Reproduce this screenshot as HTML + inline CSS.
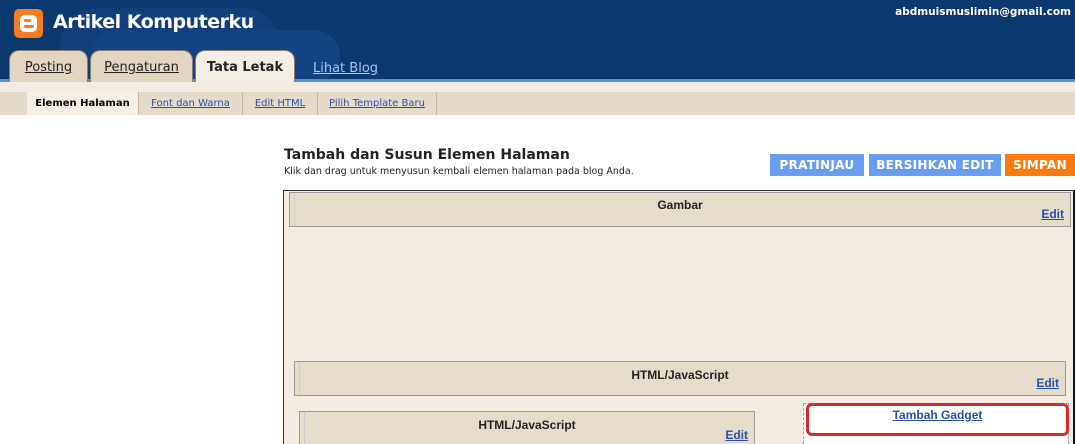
<!DOCTYPE html>
<html><head><meta charset="utf-8"><style>
*{margin:0;padding:0;box-sizing:border-box}
html{width:1075px;height:444px;overflow:hidden}
body{width:1075px;height:444px;overflow:hidden;background:#fff;font-family:"DejaVu Sans","Liberation Sans",sans-serif;position:relative}
.a{position:absolute}
#hdr{left:0;top:0;width:1075px;height:82px;background:#0c3870}
.blob{background:#144383;border-radius:40px}
.tab{top:50px;height:32px;background:#e2d6c3;border:1px solid #8a7d6a;border-bottom:none;border-radius:10px 10px 0 0;font-size:13px;color:#222;text-align:center;line-height:34px}
.tab u{text-decoration:underline}
a,.lnk{color:#2a4fa8;text-decoration:underline}
.sub{font-size:10px;top:92px;height:23px;line-height:23px;text-align:center;border-right:1px solid #c4b8a4}
.btn{top:154px;height:22px;color:#fff;font-weight:bold;font-size:12px;line-height:22px;text-align:center;letter-spacing:.3px}
.box{background:#e5dccb;border:1px solid #9a9a9a;font-family:"Liberation Sans",sans-serif;font-size:12px;font-weight:bold;color:#222;text-align:center}
.box .e{position:absolute;right:6px;bottom:5px;font-size:12px;color:#2a4fa8;text-decoration:underline}
.grip{position:absolute;left:1px;top:1px;bottom:1px;width:4px;border-right:1px dotted #bbb}
</style></head><body>
<div id="hdr" class="a">
 <div class="a blob" style="left:60px;top:8px;width:220px;height:74px;background:#123f7c"></div>
 <div class="a blob" style="left:90px;top:30px;width:250px;height:52px"></div>
 <div class="a" style="left:14px;top:9px;width:29px;height:29px;background:#f57d1f;border-radius:5px"></div>
 <div class="a" style="left:20px;top:15px;width:17px;height:17px;background:#fff;border-radius:5px"></div>
 <div class="a" style="left:24px;top:19px;width:7px;height:3px;background:#f57d1f;border-radius:2px"></div>
 <div class="a" style="left:24px;top:25px;width:10px;height:3px;background:#f57d1f;border-radius:2px"></div>
 <div class="a" style="left:53px;top:11px;font-size:19px;font-weight:bold;color:#fff;font-family:'DejaVu Sans',sans-serif;letter-spacing:-.5px">Artikel Komputerku</div>
 <div class="a" style="right:4px;top:6px;font-size:10.5px;font-weight:bold;color:#fff">abdmuismuslimin@gmail.com</div>
 <div class="a" style="left:0;top:79px;width:1075px;height:3px;background:#5b8fd8"></div>
 <div class="a tab" style="left:9px;width:79px"><u>Posting</u></div>
 <div class="a tab" style="left:90px;width:103px"><u>Pengaturan</u></div>
 <div class="a tab" style="left:195px;width:100px;background:#f4ede3;font-weight:bold;height:33px">Tata Letak</div>
 <div class="a" style="left:313px;top:61px;font-size:13px;color:#a9c7ef;text-decoration:underline">Lihat Blog</div>
</div>
<div class="a" style="left:0;top:82px;width:1075px;height:10px;background:#f3ece2"></div>
<div class="a" style="left:0;top:92px;width:1075px;height:23px;background:#e5dbcb"></div>
<div class="a sub" style="left:27px;width:112px;background:#f4eee5;font-weight:bold;color:#000">Elemen Halaman</div>
<div class="a sub lnk" style="left:139px;width:104px">Font dan Warna</div>
<div class="a sub lnk" style="left:243px;width:75px">Edit HTML</div>
<div class="a sub lnk" style="left:318px;width:119px">Pilih Template Baru</div>
<div class="a" style="left:284px;top:147px;font-size:14px;font-weight:bold;color:#222">Tambah dan Susun Elemen Halaman</div>
<div class="a" style="left:284px;top:166px;font-size:9.5px;color:#222">Klik dan drag untuk menyusun kembali elemen halaman pada blog Anda.</div>
<div class="a btn" style="left:770px;width:94px;background:#6a9cf0">PRATINJAU</div>
<div class="a btn" style="left:869px;width:132px;background:#6a9cf0">BERSIHKAN EDIT</div>
<div class="a btn" style="left:1005px;width:70px;background:#f77b10">SIMPAN</div>
<div class="a" style="left:283px;top:190px;width:792px;height:254px;background:#f4ece3;border:1px solid #333;border-right:2px solid #111;border-bottom:none"></div>
<div class="a box" style="left:289px;top:192px;width:782px;height:35px;padding-top:5px"><div class="grip"></div>Gambar<span class="e">Edit</span></div>
<div class="a box" style="left:294px;top:361px;width:772px;height:35px;padding-top:6px"><div class="grip"></div>HTML/JavaScript<span class="e">Edit</span></div>
<div class="a box" style="left:299px;top:411px;width:456px;height:33px;padding-top:6px;border-bottom:none"><div class="grip"></div>HTML/JavaScript<span class="e" style="bottom:2px">Edit</span></div>
<div class="a" style="left:803px;top:403px;width:266px;height:41px;border:1px dashed #999;border-bottom:none;background:#fff"></div>
<div class="a" style="left:806px;top:403px;width:263px;height:33px;border:3px solid #d62a2a;border-radius:6px;text-align:center;font-family:'Liberation Sans',sans-serif;font-size:12px;font-weight:bold;padding-top:2px"><span class="lnk">Tambah Gadget</span></div>
</body></html>
